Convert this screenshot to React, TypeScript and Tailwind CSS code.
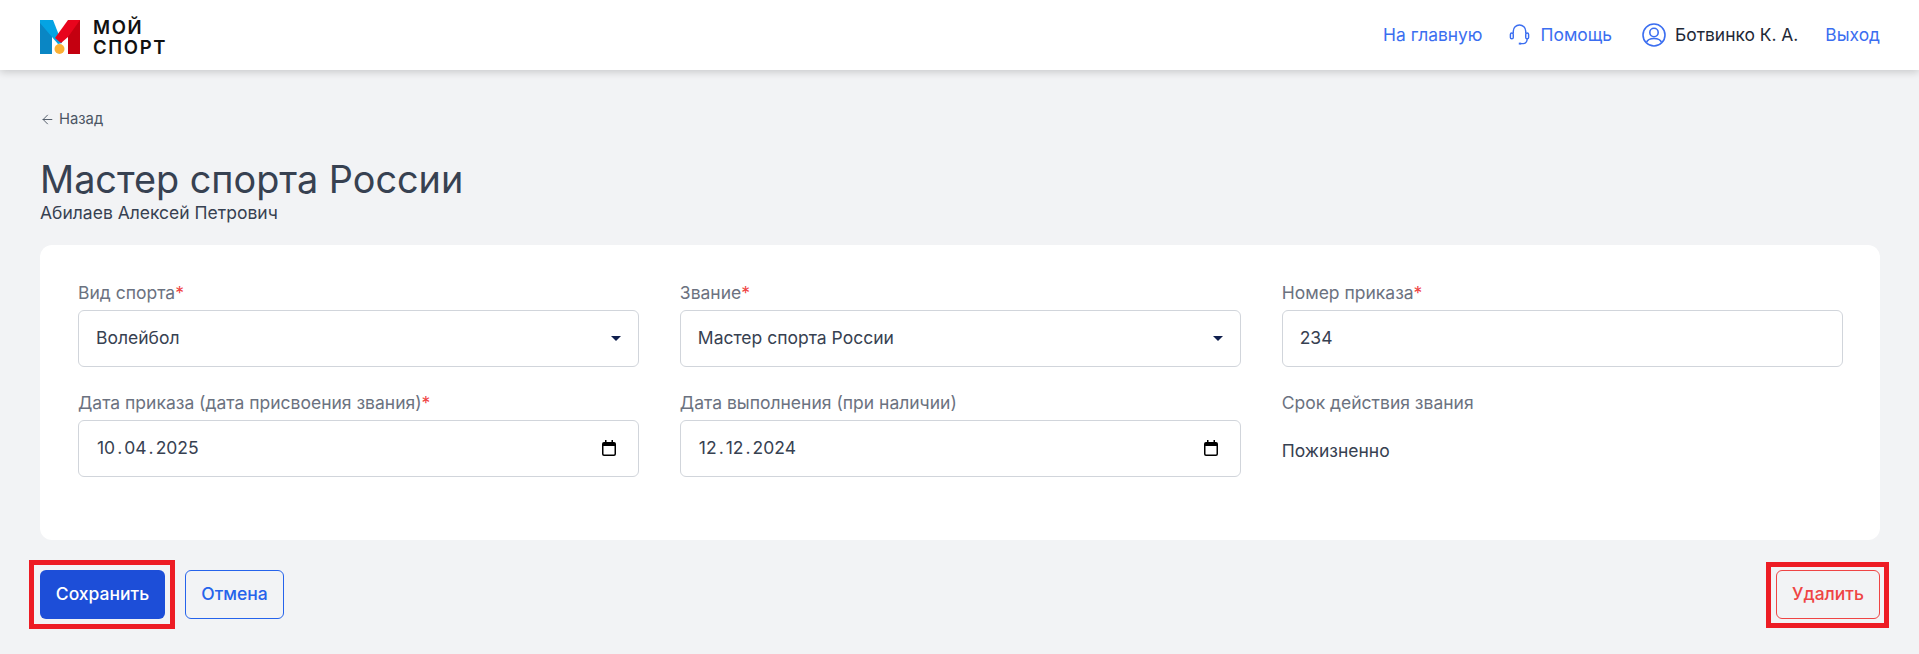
import { ArrowLeft } from "lucide-react"

function Logo() {
  return (
    <div className="flex items-center gap-[13px]">
      <svg className="mt-1" width="40" height="34" viewBox="0 0 40 34">
        <path d="M0 0H12V34H0Z" fill="#0a86c4" />
        <path d="M0 0H13L22 23L18 24L12 17L0 3Z" fill="#04a3e3" />
        <path d="M28 0H40V34H28Z" fill="#c40010" />
        <path d="M28 0H40L28 17L21 23L15 18Z" fill="#e8041c" />
        <circle cx="19.5" cy="29" r="5" fill="#fbb034" />
      </svg>
      <div className="mt-[3px] font-['Inter',sans-serif] text-[18.5px] font-semibold leading-[20px] tracking-[0.09em] text-[#111111]">
        <div>МОЙ</div>
        <div>СПОРТ</div>
      </div>
    </div>
  )
}

function Header() {
  return (
    <nav className="flex h-[70px] items-center justify-between bg-white px-10 pr-[39px] shadow-[0_2px_8px_rgba(0,0,0,0.18)]">
      <Logo />
      <div className="flex items-center text-[17.4px] text-[#3b6ef0]">
        <a>На главную</a>
        <svg className="ml-[25px] mr-[10px]" width="23" height="23" viewBox="0 0 24 24" fill="none" stroke="currentColor" strokeWidth="1.5">
          <path d="M5.5 11V8.5a6.5 6.5 0 0 1 13 0V11" />
          <rect x="2.5" y="10.5" width="3" height="6" rx="1.5" />
          <rect x="18.5" y="10.5" width="3" height="6" rx="1.5" />
          <path d="M20 16.5c0 2.5-1.5 5-4 5h-3" />
          <path d="M12.5 20.5v2" strokeWidth="2.5" />
        </svg>
        <a>Помощь</a>
        <svg className="ml-[30px] mr-[9px]" width="24" height="24" viewBox="0 0 24 24" fill="none" stroke="currentColor" strokeWidth="1.6">
          <circle cx="12" cy="12" r="11" />
          <circle cx="12" cy="9.5" r="4.2" />
          <path d="M4.5 19.5c1-3 4-4 7.5-4s6.5 1 7.5 4" />
        </svg>
        <span className="text-[#1f2937]">Ботвинко К. А.</span>
        <a className="ml-[27px]">Выход</a>
      </div>
    </nav>
  )
}

function Field({ label, required, children }: { label: string; required?: boolean; children: React.ReactNode }) {
  return (
    <div>
      <div className="mb-[5px] h-6 text-[17.5px] leading-6 text-[#6b7280]">
        {label}
        {required && <span className="text-[#ef4444]">*</span>}
      </div>
      {children}
    </div>
  )
}

function Box({ value, icon }: { value: React.ReactNode; icon?: "select" | "date" }) {
  return (
    <div className={`flex h-[57px] items-center justify-between rounded-md border border-[#d1d5db] bg-white text-[17.5px] text-[#374151] ${icon === "date" ? "pl-[18px] pr-[21px]" : "pl-[17px] pr-[17px]"}`}>
      <span>{value}</span>
      {icon === "select" && <span className="h-0 w-0 border-x-[5px] border-t-[5px] border-x-transparent border-t-[#0f1f4d]" />}
      {icon === "date" && (
        <svg width="16" height="16" viewBox="0 0 16 16" className="text-black">
          <path d="M4 0h1.5v2h5V0H12v2h1a2 2 0 0 1 2 2v10a2 2 0 0 1-2 2H3a2 2 0 0 1-2-2V4a2 2 0 0 1 2-2h1Zm-1.5 6v8c0 .3.2.5.5.5h10c.3 0 .5-.2.5-.5V6Z" fill="currentColor" />
        </svg>
      )}
    </div>
  )
}

function DateText({ d, m, y }: { d: string; m: string; y: string }) {
  return (
    <>
      {d}
      <span className="px-[2px]">.</span>
      {m}
      <span className="px-[2px]">.</span>
      {y}
    </>
  )
}

export default function App() {
  return (
    <div className="min-h-[654px] bg-[#f2f3f5] font-['Inter',sans-serif]">
      <Header />
      <div className="px-10 pr-[39px]">
        <a className="mt-[39px] flex h-5 items-center gap-1 text-[14.8px] text-[#4b5563]">
          <ArrowLeft size={15} strokeWidth={1.5} />
          Назад
        </a>
        <h1 className="mt-[28px] text-[37.8px] font-normal leading-[44px] text-[#374151]">Мастер спорта России</h1>
        <p className="mt-[2px] text-[17.5px] leading-[20.5px] text-[#374151]">Абилаев Алексей Петрович</p>

        <div className="mt-[21px] grid h-[295px] grid-cols-3 content-start gap-x-[40.5px] gap-y-6 rounded-xl bg-white pl-[38px] pr-[37px] pt-[36px]">
          <Field label="Вид спорта" required>
            <Box value="Волейбол" icon="select" />
          </Field>
          <Field label="Звание" required>
            <Box value="Мастер спорта России" icon="select" />
          </Field>
          <Field label="Номер приказа" required>
            <Box value="234" />
          </Field>
          <Field label="Дата приказа (дата присвоения звания)" required>
            <Box value={<DateText d="10" m="04" y="2025" />} icon="date" />
          </Field>
          <Field label="Дата выполнения (при наличии)">
            <Box value={<DateText d="12" m="12" y="2024" />} icon="date" />
          </Field>
          <Field label="Срок действия звания">
            <div className="flex h-[57px] items-center pt-[6px] text-[17.5px] text-[#374151]">Пожизненно</div>
          </Field>
        </div>

        <div className="mt-[30px] flex items-center justify-between">
          <div className="flex items-center gap-5">
            <div className="relative">
              <button className="h-[49px] w-[125px] rounded-md bg-[#1d4ed8] pt-px text-[17.5px] font-medium text-white">Сохранить</button>
              <div className="absolute -bottom-[10px] -left-[11px] -right-[10px] -top-[10px] border-[5px] border-[#ed1c24]" />
            </div>
            <button className="h-[49px] w-[99px] rounded-md border border-[#2563eb] pt-px text-[17.5px] font-medium text-[#2563eb]">Отмена</button>
          </div>
          <div className="relative">
            <button className="h-[49px] w-[104px] rounded-md border border-[#ef4444] pt-px text-[17.5px] font-medium text-[#ef4444]">Удалить</button>
            <div className="absolute -bottom-[9px] -left-[10px] -right-[9px] -top-[8px] border-[5px] border-[#ed1c24]" />
          </div>
        </div>
      </div>
    </div>
  )
}
